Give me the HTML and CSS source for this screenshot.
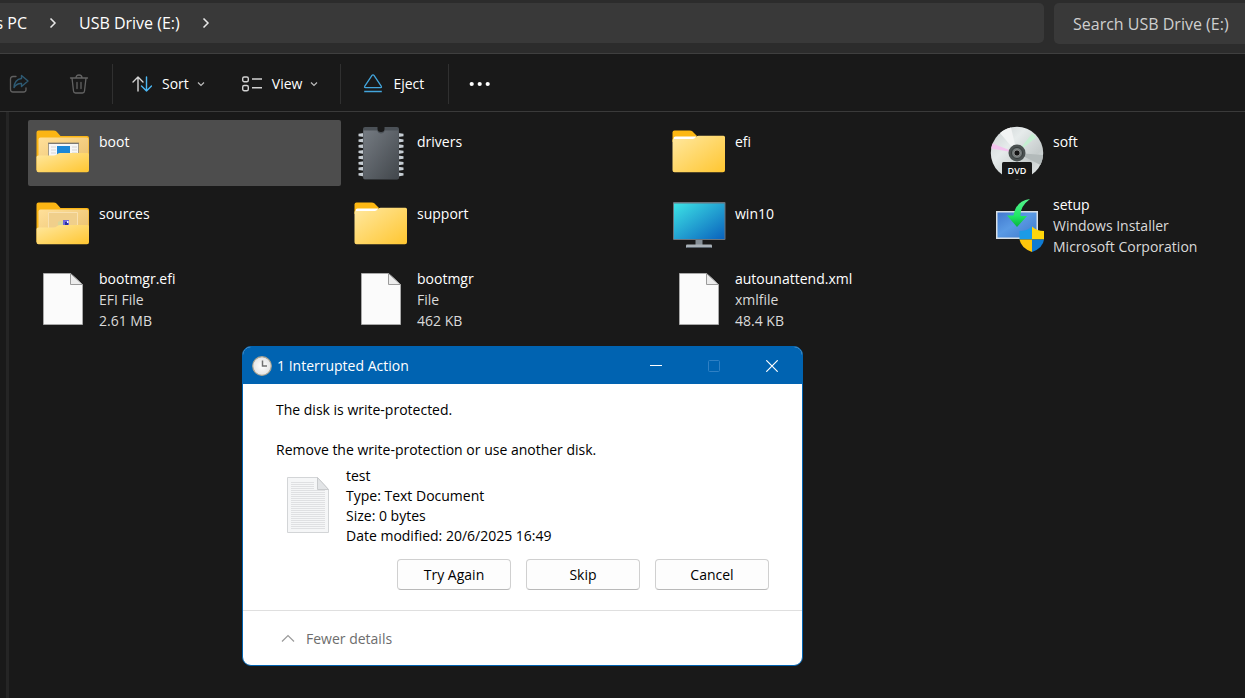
FILE: index.html
```html
<!DOCTYPE html>
<html lang="en">
<head>
<meta charset="utf-8">
<title>USB Drive (E:)</title>
<link rel="stylesheet" href="styles.css">
</head>
<body>
<svg class="defs" aria-hidden="true">
  <defs>
    <linearGradient id="gold" x1="0" y1="0" x2="1" y2="1"><stop offset="0" stop-color="#ffe8a0"/><stop offset="1" stop-color="#ffc630"/></linearGradient>
    <linearGradient id="inner" x1="0" y1="0" x2="1" y2="1"><stop offset="0" stop-color="#ffe09a"/><stop offset="1" stop-color="#e8bd69"/></linearGradient>
    <linearGradient id="steel" x1="0" y1="0" x2="1" y2="1"><stop offset="0" stop-color="#757b82"/><stop offset="1" stop-color="#42474c"/></linearGradient>
    <linearGradient id="screen" x1="0" y1="0" x2="1" y2="1"><stop offset="0" stop-color="#3de3e6"/><stop offset="1" stop-color="#0a62bd"/></linearGradient>
    <linearGradient id="disc" x1="0" y1="0" x2="1" y2="1"><stop offset="0" stop-color="#c9cfd0"/><stop offset=".35" stop-color="#e6ebeb"/><stop offset=".7" stop-color="#c5cbcb"/><stop offset="1" stop-color="#f0f2f2"/></linearGradient>
    <linearGradient id="blue" x1="0" y1="0" x2="1" y2="1"><stop offset="0" stop-color="#4179cf"/><stop offset=".45" stop-color="#5a9ae4"/><stop offset="1" stop-color="#3f78cb"/></linearGradient>
    <linearGradient id="green" x1="0" y1="0" x2="0" y2="1"><stop offset="0" stop-color="#55f08c"/><stop offset=".6" stop-color="#1fe865"/><stop offset="1" stop-color="#08b33c"/></linearGradient>
    <radialGradient id="clockface"><stop offset="0" stop-color="#ffffff"/><stop offset="1" stop-color="#e4e4e4"/></radialGradient>
    <symbol id="folder" viewBox="0 0 54 54">
      <path d="M.5 16V6.500q0-2 2-2h15q2 0 3 1l4 4v6z" fill="#fdb813"/>
      <path d="M1.500 12.500q0-2 2-2h21l-2 3h-21z" fill="#fff"/>
      <path d="M.5 14q0-1 1-1h19q1.500 0 2.500-1l1.500-1.500q.7-.7 2-.7h25q1.500 0 1.500 1.500v33q0 2-2 2h-48.500q-2 0-2-2z" fill="url(#gold)"/>
    </symbol>
    <symbol id="folder-back" viewBox="0 0 54 54">
      <path d="M.5 44V6.500q0-2 2-2h15q2 0 3 1l4 4.500h26.500q2 0 2 2V44z" fill="#fbb514"/>
      <path d="M2.500 42V13.500q0-2 2-2h46q2 0 2 2V42z" fill="url(#inner)"/>
    </symbol>
    <symbol id="folder-front" viewBox="0 0 54 54">
      <path d="M.5 31q0-1.500 2-1.500h15q2 0 3.500-1.200t3.500-1.300h27q1.500 0 1.500 1.500v15.700q0 2-2 2H2.500q-2 0-2-2z" fill="url(#gold)"/>
    </symbol>
    <symbol id="page" viewBox="0 0 54 54">
      <path d="M7.500 1.500h27l12 11v40h-39z" fill="#fbfbfb" stroke="#a9a9a9"/>
      <path d="M34.500 1.500v11h12z" fill="#ececec" stroke="#9b9b9b"/>
    </symbol>
    <symbol id="chevron" viewBox="0 0 8 8"><path d="M1 2.500l3 3 3-3" fill="none" stroke="#bdbdbd" stroke-width="1.200"/></symbol>
  </defs>
</svg>

<div class="explorer">
  <header class="location">
    <nav class="crumbs" aria-label="Address">
      <a class="crumb crumb-first" href="#pc">This PC</a>
      <svg class="crumb-arrow" viewBox="0 0 10 10"><path d="M2.500 .5L7 5 2.500 9.500"/></svg>
      <a class="crumb" href="#usb">USB Drive (E:)</a>
      <svg class="crumb-arrow" viewBox="0 0 10 10"><path d="M2.500 .5L7 5 2.500 9.500"/></svg>
    </nav>
    <input class="search" type="search" placeholder="Search USB Drive (E:)" aria-label="Search USB Drive (E:)">
  </header>

  <div class="toolbar">
    <div class="tools tools-edit">
      <button class="tool" aria-label="Share" disabled>
        <svg class="tool-icon" viewBox="0 0 20 20" fill="none" stroke-linejoin="round" stroke-linecap="round"><path d="M7 2.500H4q-2.500 0-2.500 2.500v10.500q0 2.500 2.500 2.500h10.500q2.500 0 2.500-2.500V14" stroke="#606060" stroke-width="1.300"/><path d="M12.500 1.500L19 7l-6.500 5.500V9.500Q8 9 5 13.500 5.500 5.500 12.500 4.500z" stroke="#2e5a73" stroke-width="1.400"/></svg>
      </button>
      <button class="tool" aria-label="Delete" disabled>
        <svg class="tool-icon" viewBox="0 0 20 20" fill="none" stroke="#636363" stroke-width="1.300" stroke-linecap="round" stroke-linejoin="round"><path d="M1.500 4h17M7 4q0-3 3-3t3 3M3 4l1.500 13q.2 2 2 2h7q1.800 0 2-2L17 4M8 8.500v6M12 8.500v6"/></svg>
      </button>
    </div>
    <div class="tools tools-view">
      <button class="tool">
        <svg class="tool-icon" viewBox="0 0 20 20" fill="none" stroke-width="1.400" stroke-linecap="round" stroke-linejoin="round"><path d="M6 17V3M1 8l5-5 5 5" stroke="#d6d6d6"/><path d="M14.500 3v14M9.500 12l5 5 5-5" stroke="#4cb8f5"/></svg>
        Sort
        <svg class="tool-chevron"><use href="#chevron"/></svg>
      </button>
      <button class="tool">
        <svg class="tool-icon" viewBox="0 0 20 20" fill="none" stroke="#d2d2d2" stroke-width="1.400"><rect x=".7" y="3" width="5.600" height="4.800" rx="1.500"/><rect x=".7" y="11.500" width="5.600" height="5.300" rx="1.500"/><path d="M10 5h10M10 13.700h10"/></svg>
        View
        <svg class="tool-chevron"><use href="#chevron"/></svg>
      </button>
    </div>
    <div class="tools tools-drive">
      <button class="tool">
        <svg class="tool-icon" viewBox="0 0 20 20" fill="none" stroke="#43a5dc" stroke-width="1.300" stroke-linejoin="round"><path d="M10 .8q.6 0 1 .6l7.200 10.800q.8 1.500-.7 1.500h-15q-1.500 0-.7-1.500L9 1.400q.4-.6 1-.6zM1.200 17.500h17.600"/></svg>
        Eject
      </button>
    </div>
    <div class="tools tools-more">
      <button class="tool" aria-label="See more">
        <svg class="dots" viewBox="0 0 22 6" fill="#fff"><circle cx="2.700" cy="3" r="2.100"/><circle cx="10.700" cy="3" r="2.100"/><circle cx="18.700" cy="3" r="2.100"/></svg>
      </button>
    </div>
  </div>

  <main class="pane">
    <ul class="files">
      <li class="file selected">
        <svg class="file-icon" viewBox="0 0 54 54"><use href="#folder-back"/><path d="M12.500 17.500h30V34h-30z" fill="#f7f7f7" stroke="#a39b88"/><path d="M12 17.200h31" stroke="#6b6b6b"/><path d="M15 21h5M15 24h5M15 27h5M36 21h5M36 24h5M36 27h5" stroke="#d5d5d5"/><path d="M21 20h13v10H21z" fill="#1b87d6"/><use href="#folder-front"/></svg>
        <div class="file-text"><span class="file-name">boot</span></div>
      </li>
      <li class="file">
        <svg class="file-icon" viewBox="0 0 54 54"><path d="M10 7l-5.500.8v2.400L10 11M10 12.600l-5.500.8v2.400l5.500.8M10 18.300l-5.500.8v2.400l5.500.8M10 23.900l-5.500.8v2.400l5.500.8M10 29.500l-5.500.8v2.400l5.500.8M10 35.200l-5.500.8v2.400l5.500.8M10 40.800l-5.500.8V44l5.500.8M10 46.400l-5.500.8v2.400l5.500.8M44 7l5.500.8v2.400L44 11M44 12.600l5.500.8v2.400l-5.500.8M44 18.300l5.500.8v2.400l-5.500.8M44 23.900l5.500.8v2.400l-5.500.8M44 29.500l5.500.8v2.400l-5.500.8M44 35.200l5.500.8v2.400l-5.500.8M44 40.800l5.500.8V44l-5.500.8M44 46.400l5.500.8v2.400l-5.500.8" fill="#c5ccd2"/><path d="M11 1h12.500v2q0 3 3.500 3t3.500-3V1H43q2 0 2 2v48.500q0 2-2 2H11q-2 0-2-2V3q0-2 2-2z" fill="#4b5157"/><path d="M9.500 4.500h13.700Q24 7.500 27 7.500t3.800-3h13.700v47q0 1.500-1.500 1.500H11q-1.500 0-1.500-1.500z" fill="url(#steel)"/></svg>
        <div class="file-text"><span class="file-name">drivers</span></div>
      </li>
      <li class="file">
        <svg class="file-icon"><use href="#folder"/></svg>
        <div class="file-text"><span class="file-name">efi</span></div>
      </li>
      <li class="file">
        <svg class="file-icon" viewBox="0 0 54 54"><circle cx="27" cy="27" r="26.200" fill="url(#disc)"/><path d="M27 27L2.500 17.500Q1.500 20 1.200 22.500z" fill="#f3c4ee"/><path d="M27 27L42 7.500q2.500 1.800 4 4z" fill="#c5efd2"/><path d="M27 27L10 7q5-4.500 11-5.600z" fill="#f2f4f4"/><path d="M27 27l26 2q-.3 5-2.500 10z" fill="#b3baba"/><circle cx="27" cy="27" r="8.500" fill="#4b5151"/><circle cx="27" cy="27" r="5.500" fill="#747b7b" stroke="#353a3a"/><circle cx="27" cy="27" r="3" fill="#151515" stroke="#a5a5a5" stroke-width=".7"/><rect x="12" y="36" width="30" height="17" rx="1.500" fill="#171717"/><text class="disc-label" x="27" y="48" text-anchor="middle">DVD</text></svg>
        <div class="file-text"><span class="file-name">soft</span></div>
      </li>

      <li class="file">
        <svg class="file-icon" viewBox="0 0 54 54"><use href="#folder-back"/><path d="M12.500 14.500h29V34h-29z" fill="#f0cf8b" stroke="#f9e1ae"/><path d="M22 24q3-2 6 0v5h-6z" fill="#d8d79a"/><path d="M27 22h6v6h-6z" fill="#7067dc"/><path d="M29 24h3v3h-3z" fill="#2932a0"/><path d="M31 23h1.500v2H31z" fill="#f5f5ff"/><use href="#folder-front"/></svg>
        <div class="file-text"><span class="file-name">sources</span></div>
      </li>
      <li class="file">
        <svg class="file-icon"><use href="#folder"/></svg>
        <div class="file-text"><span class="file-name">support</span></div>
      </li>
      <li class="file">
        <svg class="file-icon" viewBox="0 0 54 54"><path d="M23.500 42h7v6h-7z" fill="#858e96"/><rect x="14" y="46.500" width="26" height="3.500" rx="1" fill="#a9b1b8"/><path d="M14.500 49.500h25" stroke="#59636c"/><rect x="1" y="4" width="52.500" height="38" rx="1" fill="#69747e"/><path d="M2 5.500h50.500V41H2z" fill="url(#screen)"/></svg>
        <div class="file-text"><span class="file-name">win10</span></div>
      </li>
      <li class="file">
        <svg class="file-icon" viewBox="0 0 54 54"><path d="M6 13h42v28H6z" fill="#d8dfe4"/><path d="M7.500 14.500h39v25h-39z" fill="url(#blue)"/><path d="M40 1Q26 2.500 23.500 17.500H17L27 29l10-11h-6.500Q30 8.500 40 1z" fill="url(#green)"/><path d="M42 28.500q-5 4.500-12.500 4.500v8.500H42z" fill="#1c9be6"/><path d="M42 28.500q5 4.500 12 4.500v8.500H42z" fill="#ffd60a"/><path d="M29.500 41.500Q31 50 42 54V41.500z" fill="#fec60c"/><path d="M54 41.500Q53 50 42 54V41.500z" fill="#0f7bd3"/></svg>
        <div class="file-text"><span class="file-name">setup</span><span>Windows Installer</span><span>Microsoft Corporation</span></div>
      </li>

      <li class="file">
        <svg class="file-icon"><use href="#page"/></svg>
        <div class="file-text"><span class="file-name">bootmgr.efi</span><span>EFI File</span><span>2.61 MB</span></div>
      </li>
      <li class="file">
        <svg class="file-icon"><use href="#page"/></svg>
        <div class="file-text"><span class="file-name">bootmgr</span><span>File</span><span>462 KB</span></div>
      </li>
      <li class="file">
        <svg class="file-icon"><use href="#page"/></svg>
        <div class="file-text"><span class="file-name">autounattend.xml</span><span>xmlfile</span><span>48.4 KB</span></div>
      </li>
    </ul>
  </main>
</div>

<section class="dialog" role="dialog" aria-labelledby="dialog-title">
  <header class="titlebar">
    <svg class="clock" viewBox="0 0 20 20"><circle cx="10" cy="10" r="9.300" fill="url(#clockface)" stroke="#aaa391" stroke-width="1.200"/><path d="M10.500 4.500v5.500h4.500" fill="none" stroke="#707070" stroke-width="1.500"/></svg>
    <h1 class="dialog-title" id="dialog-title">1 Interrupted Action</h1>
    <button class="caption" aria-label="Minimize"><svg class="caption-icon" viewBox="0 0 12 12"><path d="M0 5.500h12" stroke="#fff"/></svg></button>
    <button class="caption" aria-label="Maximize" disabled><svg class="caption-icon" viewBox="0 0 12 12"><rect x=".5" y=".5" width="11" height="11" rx="1" fill="none" stroke="#2f80c4"/></svg></button>
    <button class="caption" aria-label="Close"><svg class="caption-icon" viewBox="0 0 12 12"><path d="M.3.3l11.400 11.400M11.700.3L.3 11.700" stroke="#fff" stroke-width="1.200"/></svg></button>
  </header>
  <div class="dialog-body">
    <p class="message">The disk is write-protected.</p>
    <p class="message">Remove the write-protection or use another disk.</p>
    <div class="item">
      <svg class="document" viewBox="0 0 44 58"><path d="M1.500 1.500h30l11 12v43h-41z" fill="#f5f6f7" stroke="#d3d5d7"/><path d="M31.500 1.500v12h11z" fill="#e2e4e6" stroke="#c9cbcd"/><path d="M5 6.500h23M5 8.500h23M5 10.500h23M5 12.500h23M5 14.500h34M5 16.500h34M5 18.500h34M5 20.500h34M5 22.500h34M5 24.500h34M5 26.500h34M5 28.500h34M5 30.500h34M5 32.500h34M5 34.500h34M5 36.500h34M5 38.500h34M5 40.500h34M5 42.500h34M5 44.500h34M5 46.500h34M5 48.500h34M5 50.500h34M5 52.500h34" stroke="#dcdedf" stroke-width=".9"/></svg>
      <div class="item-text"><span>test</span><span>Type: Text Document</span><span>Size: 0 bytes</span><span>Date modified: 20/6/2025 16:49</span></div>
    </div>
    <div class="actions">
      <button class="action">Try Again</button>
      <button class="action">Skip</button>
      <button class="action">Cancel</button>
    </div>
  </div>
  <footer class="dialog-foot">
    <button class="details"><svg class="details-icon" viewBox="0 0 14 10" fill="none" stroke="#9a9a9a" stroke-width="1.200"><path d="M1 7.500l6-6 6 6"/></svg>Fewer details</button>
  </footer>
</section>
</body>
</html>
```
FILE: styles.css
```css
* { box-sizing: border-box; }

html, body { height: 100%; }

body {
  margin: 0;
  overflow: hidden;
  background: #191919;
  color: #fff;
  font: 14px/20px "Open Sans", "Noto Sans", sans-serif;
}

button, input { font: inherit; color: inherit; }

button {
  display: flex;
  align-items: center;
  padding: 0;
  border: 0;
  background: none;
}

svg { display: block; flex: none; }

.defs { position: absolute; width: 0; height: 0; }

.explorer {
  display: flex;
  flex-direction: column;
  min-height: 100%;
}

/* Address bar */
.location {
  display: flex;
  gap: 10px;
  padding: 3px 0 9px;
  border-bottom: 1px solid #3f3f3f;
  background: #2c2c2c;
}

.crumbs {
  display: flex;
  flex: 1;
  align-items: center;
  height: 40px;
  border-radius: 0 5px 5px 0;
  background: #393939;
  font-size: 16px;
  gap: 21px;
}

.crumb { color: #fff; text-decoration: none; white-space: nowrap; }

.crumb-first {
  display: flex;
  justify-content: flex-end;
  width: 27px;
  overflow: hidden;
}

.crumb-arrow {
  width: 10px;
  height: 10px;
  fill: none;
  stroke: #e8e8e8;
  stroke-width: 1.5;
}

.search {
  width: 191px;
  height: 41px;
  padding: 0 0 0 19px;
  border: 0;
  border-radius: 5px 0 0 5px;
  background: #393939;
  font-size: 16px;
}

.search::placeholder { color: #cfcfcf; opacity: 1; }

/* Command bar */
.toolbar {
  display: flex;
  align-items: center;
  padding: 10px 0 7px;
  border-bottom: 1px solid #3a3a3a;
}

.tools {
  display: flex;
  align-items: center;
  height: 40px;
}

.tools + .tools { border-left: 1px solid #303030; }

.tools-edit { gap: 40px; padding: 0 23px 0 9px; }
.tools-view { gap: 37px; padding: 0 22px 0 19px; }
.tools-drive { padding: 0 24px 0 22px; }
.tools-more { padding-left: 20px; }

.tool { gap: 10px; }
.tool-icon { width: 20px; height: 20px; }
.tool-chevron { width: 8px; height: 8px; margin-left: -2px; }
.dots { width: 22px; height: 6px; }

/* Files */
.pane {
  flex: 1;
  margin-left: 6px;
  padding: 8px 0 8px 19px;
  border-left: 3px solid #252525;
}

.files {
  display: grid;
  grid-template-columns: 313fr 313fr 313fr 263fr;
  align-items: start;
  gap: 6px 5px;
  margin: 0;
  padding: 0;
  list-style: none;
}

.file {
  display: flex;
  align-items: flex-start;
  gap: 9px;
  min-height: 66px;
  padding: 0 0 0 8px;
  border-radius: 2px;
}

.selected { background: #4d4d4d; }

.file-icon { width: 54px; height: 54px; margin-top: 6px; }

.file-text {
  display: flex;
  flex-direction: column;
  padding: 2px 0 3px;
  color: #dadada;
  line-height: 21px;
  white-space: nowrap;
}

.file-name { color: #fff; }
.file-name:only-child { padding-top: 9px; }

.disc-label { fill: #fff; font-size: 9px; font-weight: 600; }

/* Interrupted action dialog */
.dialog {
  position: absolute;
  top: 346px;
  left: 242px;
  width: 561px;
  overflow: hidden;
  border: 1px solid #0063b1;
  border-radius: 9px;
  background: #fff;
  color: #000;
}

.titlebar {
  display: flex;
  align-items: center;
  height: 37px;
  padding: 0 1px 0 9px;
  background: #0063b1;
  color: #fff;
}

.clock { width: 20px; height: 20px; }

.dialog-title {
  flex: 1;
  margin: 0 0 0 5px;
  font-size: 14px;
  font-weight: 400;
}

.caption { justify-content: center; width: 58px; height: 36px; }
.caption-icon { width: 12px; height: 12px; }

.dialog-body { padding: 16px 33px 20px; }

.message { margin: 0 0 20px; }
.message + .message { margin-bottom: 6px; }

.item { display: flex; gap: 16px; padding-left: 10px; }
.document { width: 44px; height: 58px; margin-top: 10px; }
.item-text { display: flex; flex-direction: column; }

.actions {
  display: flex;
  justify-content: flex-end;
  gap: 15px;
  margin-top: 13px;
}

.action {
  justify-content: center;
  width: 114px;
  height: 31px;
  border: 1px solid #d0d0d0;
  border-bottom-color: #b9b9b9;
  border-radius: 4px;
  background: #fdfdfd;
}

.dialog-foot {
  padding: 18px 38px 16px;
  border-top: 1px solid #dfdfdf;
}

.details { gap: 11px; color: #6d6d6d; }
.details-icon { width: 14px; height: 10px; }
```
